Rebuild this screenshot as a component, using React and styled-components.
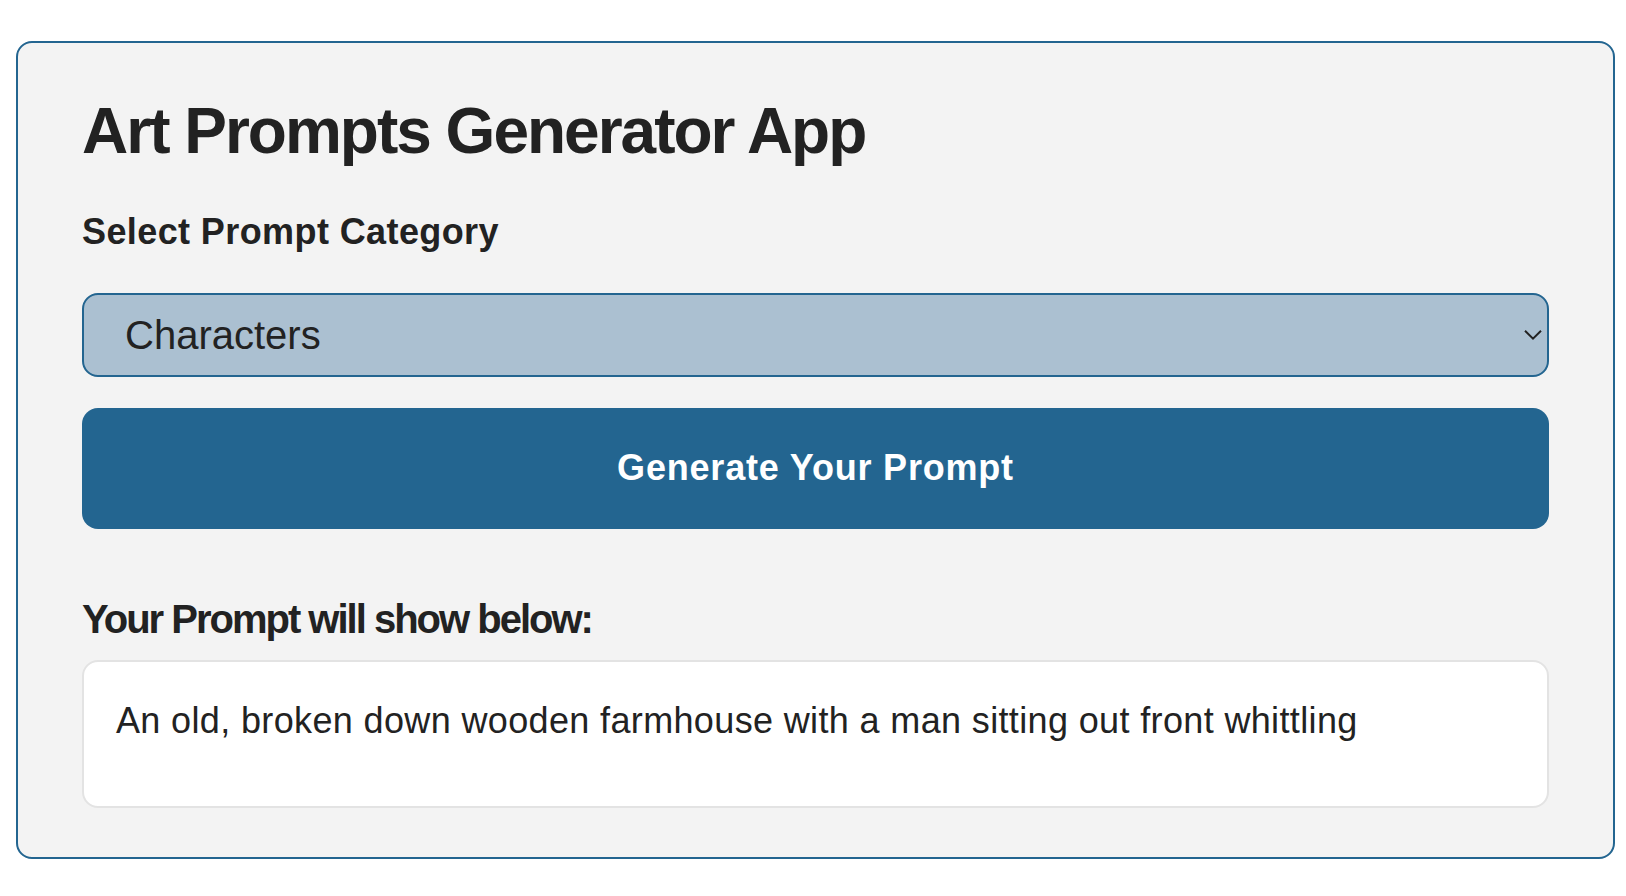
import React, { useState } from "react";
import styled, { createGlobalStyle } from "styled-components";

const GlobalStyle = createGlobalStyle`
  html, body {
    margin: 0;
    padding: 0;
    background: #ffffff;
    font-family: "Liberation Sans", Arial, sans-serif;
    color: #222222;
  }
`;

const prompts = {
  Characters: "An old, broken down wooden farmhouse with a man sitting out front whittling",
  Landscapes: "A misty mountain valley at dawn with a river winding through pine forests",
  Creatures: "A tiny dragon curled up asleep inside a teacup on a windowsill",
};

const App = () => {
  const [category, setCategory] = useState("Characters");
  const [prompt, setPrompt] = useState(prompts.Characters);

  return (
    <>
      <GlobalStyle />
      <Card>
        <Title>Art Prompts Generator App</Title>
        <Label htmlFor="category">Select Prompt Category</Label>
        <SelectWrap>
          <Select
            id="category"
            value={category}
            onChange={(e) => setCategory(e.target.value)}
          >
            {Object.keys(prompts).map((key) => (
              <option key={key} value={key}>
                {key}
              </option>
            ))}
          </Select>
          <Chevron width="18" height="11" viewBox="0 0 18 11" aria-hidden="true">
            <path d="M1 1.2 L9 9.2 L17 1.2" />
          </Chevron>
        </SelectWrap>
        <GenerateButton type="button" onClick={() => setPrompt(prompts[category])}>
          Generate Your Prompt
        </GenerateButton>
        <OutputHeading>Your Prompt will show below:</OutputHeading>
        <Output>
          <OutputText>{prompt}</OutputText>
        </Output>
      </Card>
    </>
  );
};

export default App;

const Card = styled.div`
  margin: 41px 11px 38px 16px;
  padding: 50px 64px 49px;
  background: #f3f3f3;
  border: 2px solid #236590;
  border-radius: 16px;
  display: flex;
  flex-direction: column;
`;

const Title = styled.h1`
  margin: 0 0 40px;
  font-size: 64px;
  line-height: 1.2;
  font-weight: 700;
  letter-spacing: -2px;
  color: #222222;
`;

const Label = styled.label`
  display: block;
  margin: 0 0 40px;
  font-size: 36px;
  line-height: 1.2;
  font-weight: 700;
  letter-spacing: 0.4px;
  color: #222222;
`;

const SelectWrap = styled.div`
  position: relative;
  margin-bottom: 31px;
`;

const Select = styled.select`
  appearance: none;
  -webkit-appearance: none;
  display: block;
  width: 100%;
  height: 84px;
  box-sizing: border-box;
  padding: 0 40px 0 41px;
  background: #abc0d1;
  border: 2px solid #236590;
  border-radius: 16px;
  font-family: "Liberation Sans", Arial, sans-serif;
  font-size: 40px;
  color: #222222;
  outline: none;
`;

const Chevron = styled.svg`
  position: absolute;
  right: 7px;
  top: 50%;
  transform: translateY(-50%);
  pointer-events: none;
  fill: none;
  stroke: #222222;
  stroke-width: 2;
`;

const GenerateButton = styled.button`
  height: 121px;
  width: 100%;
  border: none;
  border-radius: 16px;
  background: #236590;
  color: #ffffff;
  font-family: "Liberation Sans", Arial, sans-serif;
  font-size: 36px;
  font-weight: 700;
  letter-spacing: 0.8px;
  cursor: pointer;
  margin-bottom: 66px;
`;

const OutputHeading = styled.h3`
  margin: 0 0 17px;
  font-size: 40px;
  line-height: 1.2;
  font-weight: 700;
  letter-spacing: -2px;
  color: #222222;
`;

const Output = styled.div`
  box-sizing: border-box;
  height: 148px;
  padding: 37px 32px;
  background: #ffffff;
  border: 2px solid #e3e3e3;
  border-radius: 16px;
`;

const OutputText = styled.p`
  margin: 0;
  font-size: 36px;
  line-height: 1.2;
  letter-spacing: 0.36px;
  color: #222222;
`;
